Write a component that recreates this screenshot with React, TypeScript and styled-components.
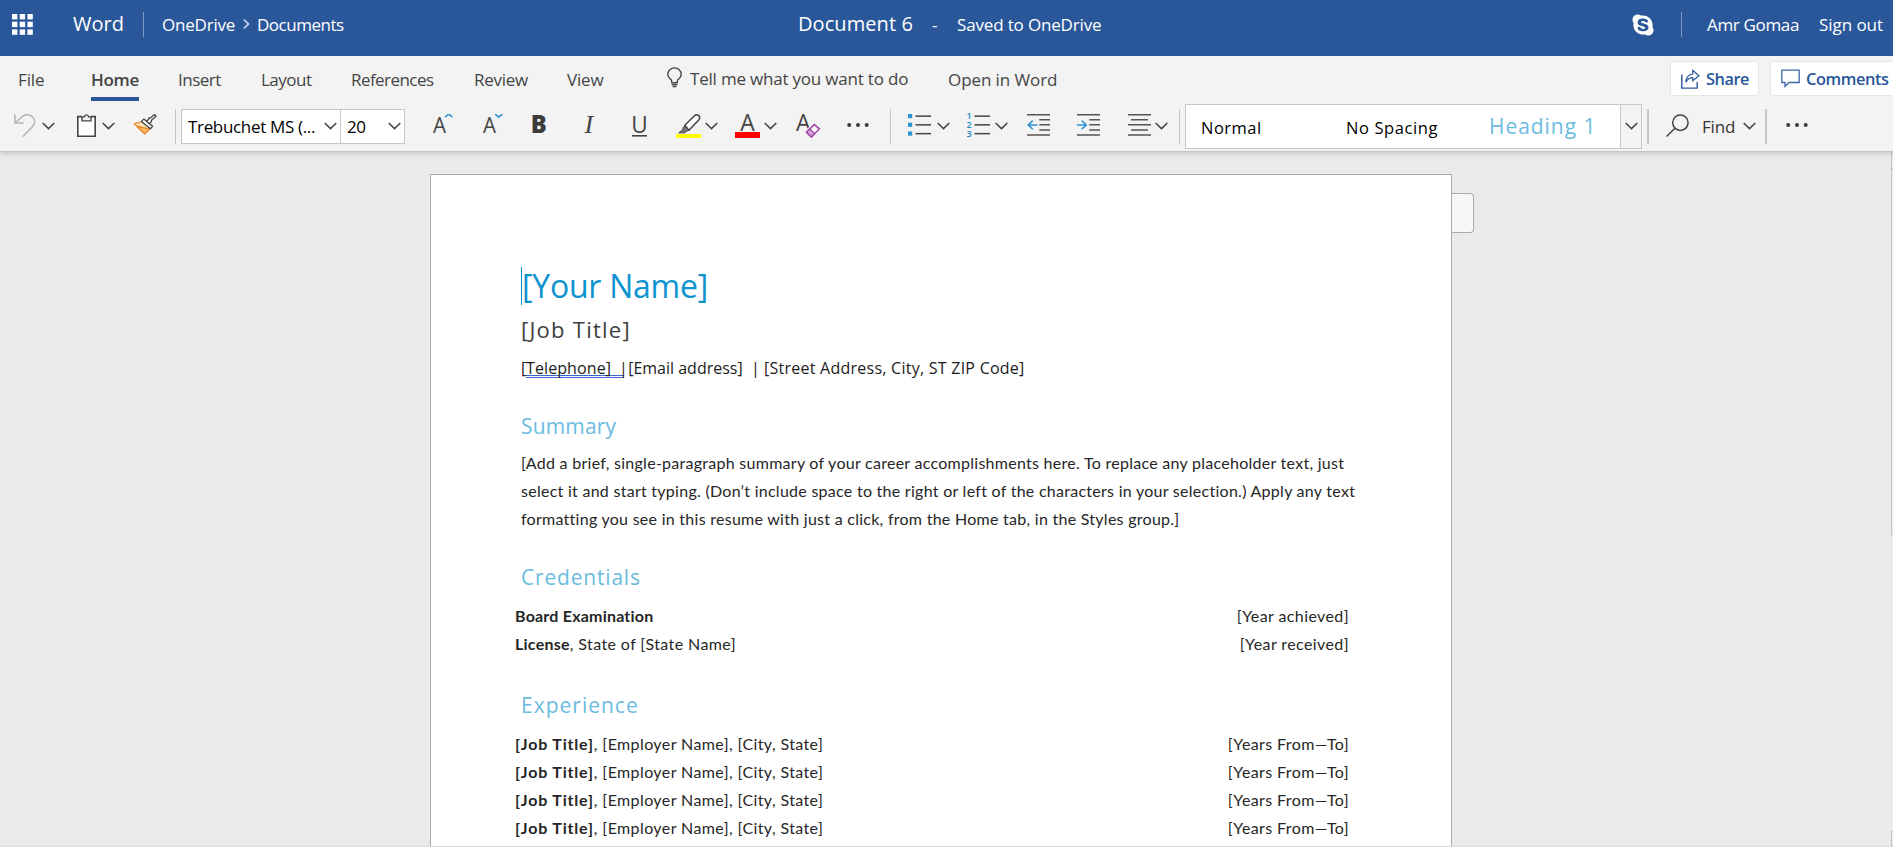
import React from "react";
import styled, { createGlobalStyle, css } from "styled-components";
import { FaSkype } from "react-icons/fa";

const ui = `"Open Sans", "Noto Sans", sans-serif`;
const body = `Lato, "Open Sans", sans-serif`;

const GlobalStyle = createGlobalStyle`
  * { box-sizing: border-box; }
  body { margin: 0; background: #fff; overflow: hidden; }
  svg { display: block; flex: none; }
`;

const Page = styled.div`
  display: flex;
  flex-direction: column;
  width: 1893px;
  height: 849px;
  overflow: hidden;
  font-family: ${ui};
`;

/* ---------- title bar ---------- */

const TitleBar = styled.header`
  display: flex;
  align-items: baseline;
  flex: none;
  height: 56px;
  background: #2a579a;
  color: #fff;
`;

const BarText = styled.span<{ $ml: number; $w: number; $ls?: number; $big?: boolean }>`
  flex: none;
  width: ${(p) => p.$w}px;
  margin-left: ${(p) => p.$ml}px;
  font-size: ${(p) => (p.$big ? 20 : 17)}px;
  line-height: 48px;
  letter-spacing: ${(p) => p.$ls ?? 0}px;
  white-space: nowrap;
`;

const BarIcon = styled.span<{ $ml: number; $mt: number }>`
  flex: none;
  align-self: flex-start;
  margin: ${(p) => p.$mt}px 0 0 ${(p) => p.$ml}px;
`;

const BarDivider = styled.i<{ $ml: number }>`
  flex: none;
  align-self: flex-start;
  width: 1px;
  height: 25px;
  margin: 12px 0 0 ${(p) => p.$ml}px;
  background: #7f9ac3;
`;

/* ---------- ribbon ---------- */

const Ribbon = styled.div`
  position: relative;
  z-index: 1;
  flex: none;
  height: 96px;
  background: #f3f3f3;
  border-bottom: 1px solid #c4c4c4;
  box-shadow: 0 2px 5px rgba(0, 0, 0, 0.14);
`;

const TabRow = styled.nav`
  display: flex;
  align-items: flex-start;
  height: 45px;
`;

const Tab = styled.span<{ $ml: number; $w: number; $ls?: number; $active?: boolean; $raise?: boolean }>`
  flex: none;
  width: ${(p) => p.$w}px;
  height: 45px;
  margin-left: ${(p) => p.$ml}px;
  color: #444;
  font-size: 17px;
  line-height: ${(p) => (p.$raise ? 45 : 47)}px;
  letter-spacing: ${(p) => p.$ls ?? 0}px;
  white-space: nowrap;
  ${(p) =>
    p.$active &&
    css`
      font-weight: 600;
      box-shadow: inset 0 -4px #2a579a;
    `}
`;

const TabIcon = styled.span<{ $ml: number }>`
  flex: none;
  margin: 11px 0 0 ${(p) => p.$ml}px;
`;

const ActionButton = styled.button<{ $ml: number; $w: number; $pad: number; $gap: number; $ls: number }>`
  display: flex;
  align-items: center;
  flex: none;
  gap: ${(p) => p.$gap}px;
  width: ${(p) => p.$w}px;
  height: 35px;
  margin: 5px 0 0 ${(p) => p.$ml}px;
  padding: 0 0 0 ${(p) => p.$pad}px;
  border: 1px solid #e6e6e6;
  border-radius: 3px;
  background: #fff;
  color: #2a579a;
  font: 600 16.4px/33px ${ui};
  letter-spacing: ${(p) => p.$ls}px;
  white-space: nowrap;
`;

const ToolRow = styled.div`
  display: flex;
  align-items: center;
  height: 50px;
`;

const Tool = styled.span<{ $ml: number }>`
  flex: none;
  margin-left: ${(p) => p.$ml}px;
`;

const ToolText = styled.span<{ $ml: number; $w: number; $ls?: number }>`
  flex: none;
  width: ${(p) => p.$w}px;
  margin-left: ${(p) => p.$ml}px;
  color: #333;
  font-size: 17px;
  line-height: 24px;
  letter-spacing: ${(p) => p.$ls ?? 0}px;
  padding-top: 2px;
  white-space: nowrap;
`;

const Divider = styled.i<{ $ml: number; $w?: number }>`
  flex: none;
  width: ${(p) => p.$w ?? 1}px;
  height: 35px;
  margin-left: ${(p) => p.$ml}px;
  background: #c6c6c6;
`;

const SelectGroup = styled.div`
  display: flex;
  flex: none;
  width: 224px;
  height: 35px;
  margin-left: 5px;
  border: 1px solid #c6c6c6;
  background: #fff;
`;

const Select = styled.div<{ $w: number; $ls: number; $divided?: boolean }>`
  display: flex;
  align-items: center;
  justify-content: space-between;
  width: ${(p) => p.$w}px;
  padding: 0 3px 0 6px;
  border-right: ${(p) => (p.$divided ? "1px solid #c6c6c6" : "none")};
  color: #000;
  font-size: 17px;
  line-height: 33px;
  letter-spacing: ${(p) => p.$ls}px;
  white-space: nowrap;
`;

const StyleGallery = styled.div`
  display: flex;
  flex: none;
  width: 457px;
  height: 45px;
  margin-left: 5px;
  border: 1px solid #c6c6c6;
  background: #fff;
`;

const StyleItem = styled.span<{ $w: number; $ls: number; $heading?: boolean }>`
  width: ${(p) => p.$w}px;
  padding-left: 15px;
  color: ${(p) => (p.$heading ? "#6bbbe0" : "#000")};
  font-size: ${(p) => (p.$heading ? 21 : 16.5)}px;
  line-height: ${(p) => (p.$heading ? 43 : 46)}px;
  letter-spacing: ${(p) => p.$ls}px;
  white-space: nowrap;
`;

const GalleryToggle = styled.button`
  display: flex;
  align-items: center;
  justify-content: center;
  width: 21px;
  margin-left: auto;
  padding: 0;
  border: 0;
  border-left: 1px solid #c6c6c6;
  background: #f3f3f3;
`;

/* ---------- document canvas ---------- */

const Canvas = styled.main`
  display: flex;
  align-items: flex-start;
  flex: none;
  height: 695px;
  padding: 22px 0 0 430px;
  border-bottom: 1px solid #dcdcdc;
  background: #ebeae8;
  overflow: hidden;
`;

const Paper = styled.article`
  flex: none;
  width: 1022px;
  height: 900px;
  padding: 92px 0 0 90px;
  border: 1px solid #ababab;
  background: #fff;
  color: #262626;
`;

const CommentTab = styled.aside`
  flex: none;
  width: 22px;
  height: 40px;
  margin-top: 19px;
  border: 1px solid #ababab;
  border-left: 0;
  border-radius: 0 4px 4px 0;
  background: #f7f7f7;
`;

const ScrollTrack = styled.div`
  display: flex;
  flex-direction: column;
  flex: none;
  width: 2px;
  height: 695px;
  margin: -22px 0 0 auto;
`;

const ScrollPart = styled.i<{ $h: number; $mt?: number }>`
  flex: none;
  height: ${(p) => p.$h}px;
  margin-top: ${(p) => p.$mt ?? 0}px;
  border: 1px solid #bfc2c6;
  border-top-color: #c9cacc;
  border-right: 0;
  background: #edeef0;
`;

const Name = styled.h1`
  margin: 0;
  border-left: 1px solid #0292d0;
  padding-left: 0;
  color: #0e93cf;
  font: 400 32px/38px ${ui};
  letter-spacing: -0.24px;
`;

const JobTitle = styled.h2`
  margin: 10px 0 0;
  color: #404040;
  font: 400 22px/28px ${ui};
  letter-spacing: 1.25px;
`;

const Contact = styled.p`
  display: flex;
  margin: 11px 0 0;
  color: #1c1c1c;
  font: 400 16px/28px ${ui};
  white-space: pre;
`;

const ContactPart = styled.span<{ $w: number; $ls: number }>`
  flex: none;
  width: ${(p) => p.$w}px;
  letter-spacing: ${(p) => p.$ls}px;
`;

const Flagged = styled.span`
  display: flex;
  align-self: flex-start;
  margin-left: -1px;
  height: 24px;
  border-bottom: 3px double #3c62d8;
`;

const Heading = styled.h3<{ $mt: number; $ls: number }>`
  margin: ${(p) => p.$mt}px 0 0;
  color: #6bbbe0;
  font: 400 21px/28px ${ui};
  letter-spacing: ${(p) => p.$ls}px;
`;

const Paragraph = styled.p`
  margin: 9px 0 0;
  font: 400 16px/28px ${body};
  letter-spacing: 0.27px;
  white-space: pre;
`;

const Entries = styled.ul`
  width: 834px;
  margin: 11px 0 0 -6px;
  padding: 0;
  list-style: none;
`;

const Entry = styled.li`
  display: flex;
  justify-content: space-between;
  font: 400 16px/28px ${body};
  letter-spacing: 0.4px;
`;

const Strong = styled.b<{ $ls: number }>`
  letter-spacing: ${(p) => p.$ls}px;
`;

/* ---------- icons ---------- */

const ink = "#444";
const blue = "#2f93d3";

const Chevron = () => (
  <svg width="13" height="8" viewBox="0 0 13 8" fill="none" stroke={ink} strokeWidth="1.5">
    <path d="M.7 1 6.5 6.6 12.3 1" />
  </svg>
);

const Waffle = () => (
  <svg width="21" height="21" viewBox="0 0 21 21" fill="#fff">
    {[0, 7.7, 15.4].map((y) => [0, 7.7, 15.4].map((x) => <rect key={`${x}-${y}`} x={x} y={y} width="5.4" height="5.4" />))}
  </svg>
);

const Undo = () => (
  <svg width="22" height="24" viewBox="0 0 22 24" fill="none" stroke="#b4b4b4" strokeWidth="1.5">
    <path d="M.9.3V9h8.7M1 9 8.2 2.6C11.500-.2 16 .3 18.600 3c2.600 2.800 2.300 6.600.2 9.200L9 22.400" />
  </svg>
);

const Clipboard = () => (
  <svg width="21" height="24" viewBox="0 0 21 24" fill="none" stroke={ink} strokeWidth="1.6">
    <path d="M6 2.600H1.800v19.600h17.400V2.600H15" fill="#fff" stroke="none" />
    <path d="M6 2.600H1.800v19.600h17.400V2.600H15" />
    <path d="M6 6.900V2.900h2.400C8.600 1.500 9.300.9 10.500.9s1.900.6 2.100 2H15v4z" fill="#f3f3f3" strokeWidth="1.4" />
  </svg>
);

const Brush = () => (
  <svg width="24" height="24" viewBox="0 0 24 24" fill="none" strokeWidth="1.3" strokeLinejoin="round">
    <path d="M8.600 7.500 1.300 9.900l10.400 10 5.800-5.600z" fill="#fbe0b8" stroke="#ea8a2c" />
    <path d="M3.500 12l12.700 3.200-4.500 4.700z" fill="#fbb765" stroke="#ea8a2c" />
    <path d="m8.500 7.400 2.300-2.300 8.800 7.200-2.300 2.400z" fill="#fff" stroke={ink} />
    <path d="m13.600 7.200 2.100-2 .1-1.200 1.100.2 4.700-3.600 1.400 1.600-4.600 4 .1 1.300-2.200 2.200z" fill="#fff" stroke={ink} />
  </svg>
);

const SizeA = ({ up }: { up?: boolean }) => (
  <svg width="20" height="24" viewBox="0 0 20 24" fill="none">
    <text x="0" y="19.300" fill={ink} fontFamily="Open Sans" fontSize="22" fontWeight="400" textLength="13" lengthAdjust="spacingAndGlyphs">A</text>
    <path d={up ? "M12 3.200 15.700 0l3.700 3.200" : "M12 0l3.700 3.200L19.400 0"} stroke={blue} strokeWidth="1.600" />
  </svg>
);

const Bold = () => (
  <svg width="15" height="24" viewBox="0 0 15 24">
    <text x="-1.200" y="19.300" fill="#3b3b3b" fontFamily="Open Sans" fontSize="24.500" fontWeight="800" textLength="16" lengthAdjust="spacingAndGlyphs">B</text>
  </svg>
);

const Italic = () => (
  <svg width="14" height="24" viewBox="0 0 14 24">
    <text x="1.500" y="19" fill={ink} fontFamily="Liberation Serif" fontStyle="italic" fontSize="26">I</text>
  </svg>
);

const Underline = () => (
  <svg width="15" height="24" viewBox="0 0 15 24">
    <text x="-.8" y="18.800" fill={ink} fontFamily="Open Sans" fontSize="23.500" textLength="16.500" lengthAdjust="spacingAndGlyphs">U</text>
    <rect y="21" width="15" height="1.600" fill={ink} />
  </svg>
);

const Highlighter = () => (
  <svg width="25" height="24" viewBox="0 0 25 24" fill="none" stroke={ink} strokeWidth="1.500" strokeLinejoin="round">
    <rect y="20" width="25" height="4" fill="#ff0" stroke="none" />
    <path d="M8.800 11.200 18.500 1.700c2.700-2.600 7 1.100 4.200 4.200l-9.800 10.400z" fill="#fff" />
    <path d="M8.600 11.600 7 14l-.4 2.200-3.900 2.600h6l1.700-1.400 2.400-1.100z" fill="#777" strokeWidth="1" />
  </svg>
);

const FontColor = () => (
  <svg width="25" height="24" viewBox="0 0 25 24">
    <rect y="18" width="25" height="6" fill="red" />
    <text x="5.300" y="16.800" fill={ink} fontFamily="Open Sans" fontSize="23" textLength="14.500" lengthAdjust="spacingAndGlyphs">A</text>
  </svg>
);

const ClearFormat = () => (
  <svg width="25" height="24" viewBox="0 0 25 24">
    <text x="0" y="17.300" fill={ink} fontFamily="Open Sans" fontSize="24" textLength="14.500" lengthAdjust="spacingAndGlyphs">A</text>
    <path d="m10.500 18.300 7.800-7.700 5 4.300-7.900 8.100z" fill="#fff" stroke="#f3f3f3" strokeWidth="4" />
    <path d="m10.500 18.300 7.800-7.700 5 4.300-7.900 8.100z" fill="#fff" stroke="#a23fa8" strokeWidth="1.500" />
    <path d="m10.500 18.300 3.200-3.200 4.900 4.500-3.200 3.400z" fill="#d9a3dc" stroke="#a23fa8" strokeWidth="1.300" />
  </svg>
);

const Dots = () => (
  <svg width="24" height="24" viewBox="0 0 24 24" fill="#3b3b3b">
    <circle cx="3.200" cy="11" r="2" />
    <circle cx="12" cy="11" r="2" />
    <circle cx="20.700" cy="11" r="2" />
  </svg>
);

const Bullets = () => (
  <svg width="23" height="24" viewBox="0 0 23 24" fill={blue}>
    {[0, 8.700, 17.500].map((y) => (
      <React.Fragment key={y}>
        <rect y={y} width="4.200" height="4.200" />
        <rect x="7.500" y={y + 1.400} width="15.500" height="1.500" fill={ink} />
      </React.Fragment>
    ))}
  </svg>
);

const Numbers = () => (
  <svg width="23" height="24" viewBox="0 0 23 24" overflow="visible" fill="#2087cb" fontFamily="Open Sans" fontSize="9" fontWeight="600">
    {[0, 8.700, 17.500].map((y, i) => (
      <React.Fragment key={y}>
        <text x="-.5" y={y + 5.300}>{i + 1}</text>
        <rect x="7.500" y={y + 1.400} width="15.500" height="1.500" fill={ink} />
      </React.Fragment>
    ))}
  </svg>
);

const Indent = ({ out }: { out?: boolean }) => (
  <svg width="23" height="24" viewBox="0 0 23 24" fill="none" stroke="#555" strokeWidth="1.500">
    <path d="M0 .8h23M12.300 5.800H23M12.300 10.800H23M12.300 15.900H23M0 20.900h23" />
    <path d={out ? "M10.500 10.900H1.200M5.800 6.600 1.200 10.900l4.600 4.300" : "M0 10.900h9.300M4.700 6.600l4.600 4.300-4.600 4.300"} stroke={blue} />
  </svg>
);

const Align = () => (
  <svg width="23" height="24" viewBox="0 0 23 24" fill="none" stroke="#555" strokeWidth="1.500">
    <path d="M0 .8h23M3 5.800h17M0 10.800h23M3 15.900h17M0 20.900h23" />
  </svg>
);

const Search = () => (
  <svg width="23" height="24" viewBox="0 0 23 24" fill="none" stroke={ink} strokeWidth="1.500">
    <circle cx="14.400" cy="8.700" r="7.700" />
    <path d="M9 14.200.5 22.500" />
  </svg>
);

const Bulb = () => (
  <svg width="15" height="22" viewBox="0 0 15 22" fill="none" stroke={ink} strokeWidth="1.300">
    <path d="M4.600 15.600v-2.300C2.400 11.500.8 9.700.8 7.300a6.700 6.500 0 0 1 13.400 0c0 2.400-1.600 4.200-3.800 6v2.300zM4.600 17.500h5.800M5.600 19.500h3.800" />
  </svg>
);

const ShareIcon = () => (
  <svg width="19" height="20" viewBox="0 0 19 20" fill="none" stroke="#2a579a" strokeWidth="1.400">
    <path d="M.8 5.600v13.500h15.400v-6" />
    <path d="M4.700 13.300C5.200 8.600 7.500 5.400 11.800 5V1.400l6.200 5.400-6.200 5V8.600c-3.100-.1-5.300 1.600-7.100 4.700z" strokeWidth="1.200" />
  </svg>
);

const CommentIcon = () => (
  <svg width="19" height="19" viewBox="0 0 19 19" fill="none" stroke="#3d66a6" strokeWidth="1.300">
    <path d="M.8 1.200h17.400v12.300H8L4 17.500v-4H.8z" />
  </svg>
);

const Crumb = () => (
  <svg width="7" height="10" viewBox="0 0 7 10" fill="none" stroke="#c3d0e6" strokeWidth="1.800">
    <path d="M1 .7 5.500 5 1 9.300" />
  </svg>
);

const summary = [
  "[Add a brief, single-paragraph summary of your career accomplishments here. To replace any placeholder text, just",
  "select it and start typing. (Don’t include space to the right or left of the characters in your selection.) Apply any text",
  "formatting you see in this resume with just a click, from the Home tab, in the Styles group.]",
].join("\n");

export default function App() {
  return (
    <Page>
      <GlobalStyle />
      <TitleBar>
        <BarIcon $ml={12} $mt={14}><Waffle /></BarIcon>
        <BarText $ml={40} $w={50} $big>Word</BarText>
        <BarDivider $ml={20} />
        <BarText $ml={18} $w={75} $ls={-0.2}>OneDrive</BarText>
        <BarIcon $ml={6} $mt={19}><Crumb /></BarIcon>
        <BarText $ml={7} $w={88} $ls={-0.48}>Documents</BarText>
        <BarText $ml={453} $w={115} $ls={0.08} $big>Document 6</BarText>
        <BarText $ml={19} $w={7}>-</BarText>
        <BarText $ml={18} $w={146} $ls={-0.16}>Saved to OneDrive</BarText>
        <BarIcon $ml={528} $mt={13}><FaSkype size={24} /></BarIcon>
        <BarDivider $ml={26} />
        <BarText $ml={25} $w={94} $ls={-0.33}>Amr Gomaa</BarText>
        <BarText $ml={18} $w={66} $ls={-0.05}>Sign out</BarText>
      </TitleBar>

      <Ribbon>
        <TabRow>
          <Tab $ml={18} $w={27} $ls={-0.12}>File</Tab>
          <Tab $ml={46} $w={48} $ls={-0.3} $active>Home</Tab>
          <Tab $ml={39} $w={43} $ls={-0.5}>Insert</Tab>
          <Tab $ml={40} $w={53} $ls={-0.5}>Layout</Tab>
          <Tab $ml={37} $w={84} $ls={-0.55}>References</Tab>
          <Tab $ml={39} $w={55} $ls={-0.27}>Review</Tab>
          <Tab $ml={38} $w={38} $ls={-0.16}>View</Tab>
          <TabIcon $ml={62}><Bulb /></TabIcon>
          <Tab $ml={8} $w={220} $ls={-0.2} $raise>Tell me what you want to do</Tab>
          <Tab $ml={38} $w={110} $ls={-0.09}>Open in Word</Tab>
          <ActionButton $ml={612} $w={89} $pad={10} $gap={6} $ls={-0.5}><ShareIcon />Share</ActionButton>
          <ActionButton $ml={11} $w={130} $pad={10} $gap={6} $ls={-0.42}><CommentIcon />Comments</ActionButton>
        </TabRow>

        <ToolRow>
          <Tool $ml={14}><Undo /></Tool>
          <Tool $ml={6}><Chevron /></Tool>
          <Tool $ml={21}><Clipboard /></Tool>
          <Tool $ml={5}><Chevron /></Tool>
          <Tool $ml={18}><Brush /></Tool>
          <Divider $ml={18} />
          <SelectGroup>
            <Select $w={159} $ls={-0.33} $divided>Trebuchet MS (...<Chevron /></Select>
            <Select $w={63} $ls={-0.5}>20<Chevron /></Select>
          </SelectGroup>
          <Tool $ml={28}><SizeA up /></Tool>
          <Tool $ml={30}><SizeA /></Tool>
          <Tool $ml={29}><Bold /></Tool>
          <Tool $ml={36}><Italic /></Tool>
          <Tool $ml={35}><Underline /></Tool>
          <Tool $ml={29}><Highlighter /></Tool>
          <Tool $ml={4}><Chevron /></Tool>
          <Tool $ml={17}><FontColor /></Tool>
          <Tool $ml={4}><Chevron /></Tool>
          <Tool $ml={19}><ClearFormat /></Tool>
          <Tool $ml={25}><Dots /></Tool>
          <Divider $ml={20} />
          <Tool $ml={17}><Bullets /></Tool>
          <Tool $ml={6}><Chevron /></Tool>
          <Tool $ml={17}><Numbers /></Tool>
          <Tool $ml={5}><Chevron /></Tool>
          <Tool $ml={19}><Indent out /></Tool>
          <Tool $ml={27}><Indent /></Tool>
          <Tool $ml={28}><Align /></Tool>
          <Tool $ml={4}><Chevron /></Tool>
          <Divider $ml={11} />
          <StyleGallery>
            <StyleItem $w={145} $ls={0.5}>Normal</StyleItem>
            <StyleItem $w={143} $ls={0.6}>No Spacing</StyleItem>
            <StyleItem $w={120} $ls={0.95} $heading>Heading 1</StyleItem>
            <GalleryToggle><Chevron /></GalleryToggle>
          </StyleGallery>
          <Divider $ml={5} $w={2} />
          <Tool $ml={17}><Search /></Tool>
          <ToolText $ml={13} $w={34} $ls={-0.16}>Find</ToolText>
          <Tool $ml={7}><Chevron /></Tool>
          <Divider $ml={9} $w={2} />
          <Tool $ml={18}><Dots /></Tool>
        </ToolRow>
      </Ribbon>

      <Canvas>
        <Paper>
          <Name>[Your Name]</Name>
          <JobTitle>[Job Title]</JobTitle>
          <Contact>
            <ContactPart $w={6} $ls={0}>[</ContactPart>
            <Flagged>
              <ContactPart $w={93} $ls={0.1}>Telephone]</ContactPart>
              <ContactPart $w={5} $ls={0}>|</ContactPart>
            </Flagged>
            <ContactPart $w={127} $ls={0}>{" "}[Email address]</ContactPart>
            <ContactPart $w={13} $ls={0}>|</ContactPart>
            <ContactPart $w={262} $ls={0.25}>[Street Address, City, ST ZIP Code]</ContactPart>
          </Contact>

          <Heading $mt={30} $ls={0.16}>Summary</Heading>
          <Paragraph>{summary}</Paragraph>

          <Heading $mt={30} $ls={0.81}>Credentials</Heading>
          <Entries>
            <Entry>
              <Strong $ls={0.21}>Board Examination</Strong>
              <span>[Year achieved]</span>
            </Entry>
            <Entry>
              <span><Strong $ls={0.24}>License</Strong>, State of [State Name]</span>
              <span>[Year received]</span>
            </Entry>
          </Entries>

          <Heading $mt={33} $ls={1}>Experience</Heading>
          <Entries>
            {[0, 1, 2, 3].map((n) => (
              <Entry key={n}>
                <span><Strong $ls={0.81}>[Job Title]</Strong>, [Employer Name], [City, State]</span>
                <span>[Years From—To]</span>
              </Entry>
            ))}
          </Entries>
        </Paper>
        <CommentTab />
        <ScrollTrack>
          <ScrollPart $h={17} />
          <ScrollPart $h={366} />
          <ScrollPart $h={15} $mt={296} />
        </ScrollTrack>
      </Canvas>
    </Page>
  );
}
